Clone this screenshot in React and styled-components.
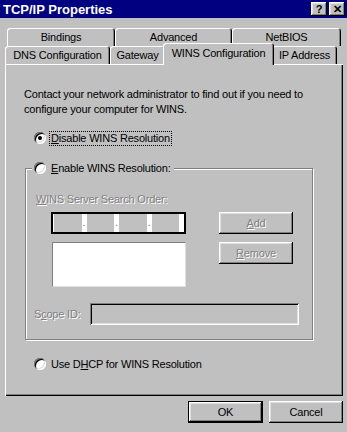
import React from "react";
import styled, { createGlobalStyle } from "styled-components";

// ===== TCP/IP 등록정보 대화상자 (WINS 탭) =====

const GlobalStyle = createGlobalStyle`
  html, body {
    margin: 0;
    padding: 0;
    background: #c0c0c0;
  }
  body {
    font-family: "Liberation Sans", Arial, sans-serif;
    font-size: 11px;
    letter-spacing: -0.2px;
    color: #000;
  }
`;

const backTabs = [
    { label: "Bindings", width: 108 },
    { label: "Advanced", width: 117 },
    { label: "NetBIOS", width: 109 },
];

const frontTabs = [
    { label: "DNS Configuration", width: 105 },
    { label: "Gateway", width: 55 },
    { label: "WINS Configuration", width: 111, active: true },
    { label: "IP Address", width: 65 },
];

function App() {
    return (
        <Window>
            <GlobalStyle />
            <TitleBar>
                <Title>TCP/IP Properties</Title>
                <CaptionButtons>
                    <CaptionButton>?</CaptionButton>
                    <CaptionButton>✕</CaptionButton>
                </CaptionButtons>
            </TitleBar>

            <TabStrip>
                <TabRow $indent={7}>
                    {backTabs.map((t) => (
                        <Tab key={t.label} style={{ width: t.width }}>
                            {t.label}
                        </Tab>
                    ))}
                </TabRow>
                <TabRow $indent={5}>
                    {frontTabs.map((t) => (
                        <Tab key={t.label} $active={t.active} style={{ width: t.width }}>
                            {t.label}
                        </Tab>
                    ))}
                </TabRow>
            </TabStrip>

            <Panel>
                <Intro>
                    Contact your network administrator to find out if you need to
                    <br />
                    configure your computer for WINS.
                </Intro>

                <RadioRow $top={14}>
                    <Radio $checked />
                    <FocusLabel>
                        <u>D</u>isable WINS Resolution
                    </FocusLabel>
                </RadioRow>

                <Group>
                    <Legend>
                        <RadioRow $top={0} $indent={0}>
                            <Radio />
                            <Label>
                                <u>E</u>nable WINS Resolution:
                            </Label>
                        </RadioRow>
                    </Legend>

                    <GroupLabel>
                        <u>W</u>INS Server Search Order:
                    </GroupLabel>

                    <ServerGrid>
                        <IpField>
                            {[0, 1, 2, 3].map((i) => (
                                <IpCell key={i}>
                                    <IpPart />
                                    <IpDot>{i < 3 ? "." : ""}</IpDot>
                                </IpCell>
                            ))}
                        </IpField>
                        <Button disabled>
                            <u>A</u>dd
                        </Button>
                        <ListBox />
                        <Button disabled>
                            <u>R</u>emove
                        </Button>
                    </ServerGrid>

                    <ScopeRow>
                        <ScopeLabel>
                            S<u>c</u>ope ID:
                        </ScopeLabel>
                        <TextField />
                    </ScopeRow>
                </Group>

                <RadioRow $top={17}>
                    <Radio />
                    <Label>
                        Use D<u>H</u>CP for WINS Resolution
                    </Label>
                </RadioRow>
            </Panel>

            <Footer>
                <Button $default>OK</Button>
                <Button>Cancel</Button>
            </Footer>
        </Window>
    );
}

export default App;

const Window = styled.div`
  width: 347px;
  height: 432px;
  background: #c0c0c0;
  display: flex;
  flex-direction: column;
  overflow: hidden;
`;

const TitleBar = styled.div`
  height: 18px;
  background: #000080;
  display: flex;
  align-items: center;
  justify-content: space-between;
  padding: 0 2px 0 3px;
`;

const Title = styled.div`
  color: #fff;
  font-weight: bold;
  font-size: 13px;
  letter-spacing: 0;
`;

const CaptionButtons = styled.div`
  display: flex;
  gap: 2px;
`;

const CaptionButton = styled.div`
  width: 16px;
  height: 14px;
  background: #c0c0c0;
  box-shadow: inset -1px -1px #000, inset 1px 1px #fff, inset -2px -2px #808080,
    inset 2px 2px #dfdfdf;
  font-weight: bold;
  font-size: 11px;
  line-height: 14px;
  text-align: center;
  color: #000;
`;

const TabStrip = styled.div`
  margin-top: 10px;
  position: relative;
  z-index: 1;
`;

const TabRow = styled.div`
  display: flex;
  align-items: flex-end;
  height: 18px;
  padding-left: ${(p) => p.$indent}px;
`;

const Tab = styled.div`
  box-sizing: border-box;
  height: ${(p) => (p.$active ? 22 : 18)}px;
  margin: ${(p) => (p.$active ? "0 -2px -1px" : "0")};
  position: relative;
  z-index: ${(p) => (p.$active ? 2 : 1)};
  background: #c0c0c0;
  border-radius: 3px 3px 0 0;
  box-shadow: inset 1px 1px #fff, inset -1px 0 #000, inset -2px 0 #808080;
  display: flex;
  align-items: center;
  justify-content: center;
  padding-bottom: ${(p) => (p.$active ? 3 : 0)}px;
  font-size: 11px;
  white-space: nowrap;
`;

const Panel = styled.div`
  box-sizing: border-box;
  margin-left: 5px;
  width: 338px;
  height: 332px;
  background: #c0c0c0;
  box-shadow: inset 1px 1px #fff, inset -1px -1px #000, inset -2px -2px #808080;
  padding: 23px 0 0 19px;
  display: flex;
  flex-direction: column;
  align-items: flex-start;
`;

const Intro = styled.div`
  line-height: 15px;
`;

const RadioRow = styled.div`
  display: flex;
  align-items: center;
  gap: 4px;
  height: 14px;
  margin-top: ${(p) => p.$top}px;
  padding-left: ${(p) => (p.$indent === undefined ? 10 : p.$indent)}px;
`;

const Radio = styled.span`
  width: 12px;
  height: 12px;
  flex: none;
  border-radius: 50%;
  background: #fff;
  box-shadow: inset 1px 1px #808080, inset -1px -1px #fff, inset 2px 2px #000,
    inset -2px -2px #dfdfdf;
  position: relative;

  &::after {
    content: "";
    display: ${(p) => (p.$checked ? "block" : "none")};
    position: absolute;
    left: 4px;
    top: 4px;
    width: 4px;
    height: 4px;
    border-radius: 50%;
    background: #000;
  }
`;

const Label = styled.span`
  white-space: nowrap;
  padding: 0 1px;
`;

const FocusLabel = styled(Label)`
  outline: 1px dotted #000;
  line-height: 13px;
`;

const Group = styled.fieldset`
  box-sizing: border-box;
  margin: 16px 0 0 1px;
  padding: 0 0 14px 0;
  width: 288px;
  border: 1px solid #808080;
  box-shadow: inset 1px 1px #fff, 1px 1px #fff;
  display: flex;
  flex-direction: column;
  align-items: flex-start;
`;

const Legend = styled.legend`
  margin-left: 6px;
  padding: 0 2px;
  background: #c0c0c0;
`;

const Disabled = styled.span`
  color: #808080;
  text-shadow: 1px 1px 0 #fff;
  white-space: nowrap;
`;

const GroupLabel = styled(Disabled)`
  margin: 17px 0 0 10px;
  line-height: 14px;
`;

const ServerGrid = styled.div`
  display: grid;
  grid-template-columns: 135px 74px;
  grid-template-rows: 22px 45px;
  column-gap: 33px;
  row-gap: 8px;
  margin: 6px 0 0 25px;
  align-items: start;
`;

const IpField = styled.div`
  box-sizing: border-box;
  height: 22px;
  border: 2px solid #000;
  background: #fff;
  display: flex;
  padding-left: 1px;
`;

const IpCell = styled.div`
  display: flex;
  flex: 1;
`;

const IpPart = styled.div`
  flex: 1;
  background: #c0c0c0;
`;

const IpDot = styled.div`
  width: 5px;
  font-size: 11px;
  line-height: 16px;
  color: #808080;
  text-align: center;
`;

const ListBox = styled.div`
  box-sizing: border-box;
  height: 45px;
  margin-left: 1px;
  background: #fff;
  border-top: 1px solid #808080;
  border-left: 1px solid #808080;
  border-right: 1px solid #dfdfdf;
  border-bottom: 1px solid #dfdfdf;
`;

const Button = styled.button`
  box-sizing: border-box;
  width: ${(p) => (p.$default ? 75 : 74)}px;
  height: 22px;
  padding: 0;
  background: #c0c0c0;
  font-family: "Liberation Sans", Arial, sans-serif;
  font-size: 11px;
  letter-spacing: -0.2px;
  color: ${(p) => (p.disabled ? "#808080" : "#000")};
  text-shadow: ${(p) => (p.disabled ? "1px 1px 0 #fff" : "none")};
  border: ${(p) => (p.$default ? "1px solid #000" : "none")};
  box-shadow: inset -1px -1px #000, inset 1px 1px #fff, inset -2px -2px #808080,
    inset 2px 2px #dfdfdf;
  outline: none;
`;

const ScopeRow = styled.div`
  display: flex;
  align-items: center;
  margin: 16px 0 0 8px;
`;

const ScopeLabel = styled(Disabled)`
  width: 56px;
`;

const TextField = styled.div`
  box-sizing: border-box;
  width: 209px;
  height: 22px;
  background: #c0c0c0;
  box-shadow: inset 1px 1px #808080, inset -1px -1px #fff, inset 2px 2px #000,
    inset -2px -2px #dfdfdf;
`;

const Footer = styled.div`
  display: flex;
  justify-content: flex-end;
  gap: 6px;
  margin-top: 5px;
  padding-right: 4px;
`;
